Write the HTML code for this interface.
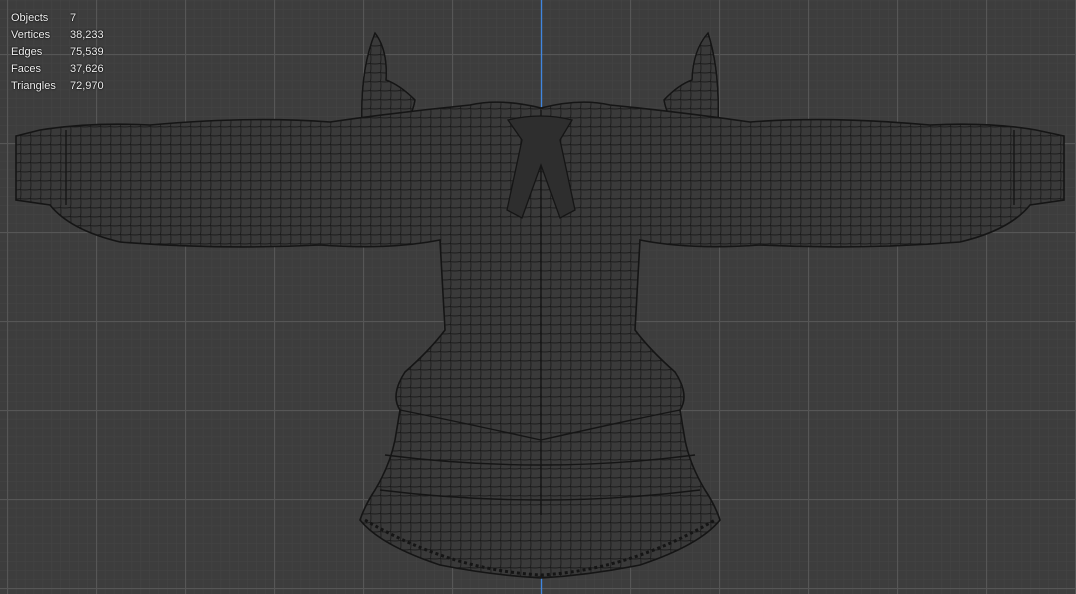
<!DOCTYPE html>
<html><head><meta charset="utf-8"><style>
html,body{margin:0;padding:0;background:#3d3d3d;overflow:hidden}
#v{position:relative;width:1076px;height:594px;background:#3d3d3d}
svg{position:absolute;left:0;top:0}
.st{position:absolute;left:11px;top:10px;font:11px "Liberation Sans",sans-serif;color:#f0f0f0;line-height:17px;text-shadow:0 0 1px #000,0 0 2px #000}
.st div{display:flex}.st span{width:59px;display:inline-block}
</style></head><body><div id="v">
<svg width="1076" height="594" viewBox="0 0 1076 594">
<defs>
<pattern id="mn" x="7" y="54" width="8.9" height="8.9" patternUnits="userSpaceOnUse">
<path d="M0 0H8.9M0 0V8.9" stroke="#454545" stroke-width="1" fill="none"/></pattern>
<pattern id="mj" x="7" y="54" width="89" height="89" patternUnits="userSpaceOnUse">
<path d="M0 .5H89M.5 0V89" stroke="#565656" stroke-width="1.2" fill="none"/></pattern>
<pattern id="w" x="0" y="0" width="10" height="9" patternUnits="userSpaceOnUse">
<path d="M0 .5Q5 1.5 10 .5M.5 0Q1.5 4.5 .5 9" stroke="#1c1c1c" stroke-width=".9" fill="none"/></pattern>
<path id="wg" d="M362 125 Q360 70 375 33 Q388 50 386 80 Q400 85 415 100 Q412 118 400 128 Z"/>
<path id="wg2" d="M718 125 Q720 70 708 33 Q693 50 692 80 Q678 85 664 100 Q667 118 680 128 Z"/>
<path id="b" d="M16 136 L40 130 Q90 122 150 125 Q250 116 330 122 Q400 112 470 105 Q500 98 541 108 Q580 98 610 105 Q680 112 750 122 Q830 116 930 125 Q990 122 1036 130 L1064 136 L1064 200 L1030 205 Q1010 230 960 242 Q860 250 760 245 Q690 250 640 240 L635 330 Q650 350 675 372 Q690 395 680 410 L685 440 Q690 465 705 490 Q715 505 720 520 Q700 545 640 565 Q590 575 541 578 Q490 575 440 565 Q380 545 360 520 Q365 505 375 490 Q390 465 395 440 L400 410 Q390 395 405 372 Q430 350 445 330 L440 240 Q390 250 320 245 Q220 250 120 242 Q70 230 50 205 L16 200 Z"/>
</defs>
<rect width="1076" height="594" fill="url(#mn)"/>
<rect width="1076" height="594" fill="url(#mj)"/>
<line x1="541.5" y1="0" x2="541.5" y2="594" stroke="#3f86e0" stroke-width="1.3"/>
<g stroke="#151515" stroke-width="1.3">
<use href="#wg" fill="#3a3a3a"/><use href="#wg" fill="url(#w)"/>
<use href="#wg2" fill="#3a3a3a"/><use href="#wg2" fill="url(#w)"/>
<use href="#b" fill="#3a3a3a" stroke="none"/>
<use href="#b" fill="url(#w)" stroke-width="1.6"/>
<path d="M66 130 V205 M1014 130 V205 M385 455 Q541 475 695 455 M380 490 Q541 510 700 490 M541 110 V515 M400 410 Q450 420 541 440 Q630 420 680 410" fill="none" stroke-width="1.4"/>
<path d="M508 120 Q541 112 572 120 L560 140 L575 210 L560 218 L541 165 L522 218 L507 210 L522 140 Z" fill="#2e2e2e"/>
<path d="M365 520 Q450 570 541 575 Q630 570 715 520" fill="none" stroke-dasharray="3 3" stroke-width="3"/>
</g>
</svg>
<div class="st">
<div><span>Objects</span>7</div>
<div><span>Vertices</span>38,233</div>
<div><span>Edges</span>75,539</div>
<div><span>Faces</span>37,626</div>
<div><span>Triangles</span>72,970</div>
</div>
</div></body></html>
